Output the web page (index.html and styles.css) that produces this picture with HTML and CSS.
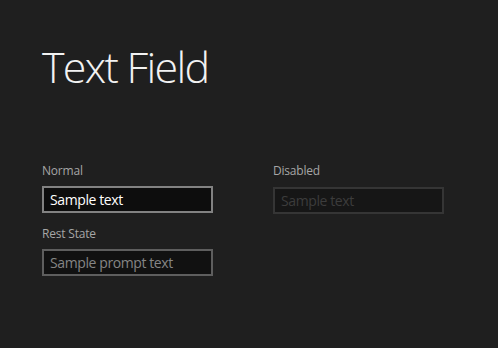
FILE: index.html
```html
<!DOCTYPE html>
<html lang="en">
<head>
    <meta charset="UTF-8">
    <meta name="viewport" content="width=device-width, initial-scale=1.0">
    <title>Text Field</title>
    <link rel="stylesheet" href="styles.css">
</head>
<body>
    <div class="page">
        <h1>Text Field</h1>

        <div class="fields">
            <div class="column">
                <div class="field">
                    <label class="field-label">Normal</label>
                    <input class="text-input text-input-normal" type="text" value="Sample text">
                </div>
                <div class="field">
                    <label class="field-label">Rest State</label>
                    <input class="text-input" type="text" placeholder="Sample prompt text">
                </div>
            </div>
            <div class="column">
                <div class="field">
                    <label class="field-label">Disabled</label>
                    <input class="text-input text-input-disabled" type="text" placeholder="Sample text" disabled>
                </div>
            </div>
        </div>
    </div>
</body>
</html>
```

FILE: styles.css
```css
body {
    margin: 0;
    padding: 0;
    background: #1f1f1f;
    font-family: 'Open Sans', 'Noto Sans', sans-serif;
    color: #ffffff;
}
.page {
    padding: 45px 0 0 42px;
}
h1 {
    font-size: 43px;
    font-weight: 300;
    line-height: 1;
    letter-spacing: -1.7px;
    margin: 0;
    color: #f2f2f2;
}
.fields {
    display: flex;
    gap: 60px;
    margin-top: 75px;
}
.column {
    display: flex;
    flex-direction: column;
    gap: 13px;
}
.field {
    display: flex;
    flex-direction: column;
    gap: 7px;
}
.field-label {
    font-size: 12px;
    line-height: 16px;
    letter-spacing: -0.2px;
    color: #a6a6a6;
}
.text-input {
    box-sizing: border-box;
    width: 171px;
    height: 27px;
    margin: 0;
    padding: 0 6px;
    border: 2px solid #5e5e5e;
    background: #111111;
    color: #ffffff;
    font-family: 'Open Sans', 'Noto Sans', sans-serif;
    font-size: 14px;
    letter-spacing: -0.4px;
    outline: none;
}
.text-input::placeholder {
    color: #858585;
}
.text-input-normal {
    border-color: #828282;
    background: #0d0d0d;
}
.text-input-disabled {
    margin-top: 1px;
    border-color: #353535;
    background: #161616;
}
.text-input-disabled::placeholder {
    color: #3c3c3c;
}
```
